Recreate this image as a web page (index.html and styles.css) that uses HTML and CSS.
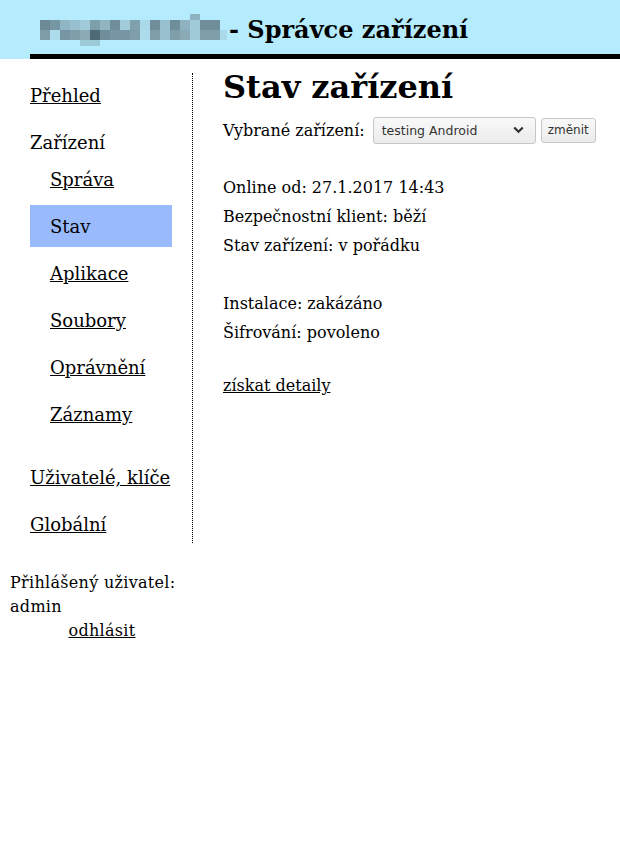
FILE: index.html
```html
<!DOCTYPE html>
<html lang="cs">
<head>
<meta charset="utf-8">
<title>Správce zařízení</title>
<link rel="stylesheet" href="styles.css">
</head>
<body>
<header class="header">
  <div class="header-bar">
    <svg class="logo" width="192" height="32" viewBox="0 0 192 32" aria-hidden="true">
      <rect x="150" y="0" width="10" height="6" fill="#8fb2c0"/>
      <rect x="0" y="6" width="10" height="10" fill="#6b8a96"/>
      <rect x="10" y="6" width="10" height="10" fill="#7596a2"/>
      <rect x="20" y="6" width="10" height="10" fill="#90b6c4"/>
      <rect x="30" y="6" width="10" height="10" fill="#98c0cf"/>
      <rect x="40" y="6" width="10" height="10" fill="#a0cad8"/>
      <rect x="50" y="6" width="10" height="10" fill="#7e9eaa"/>
      <rect x="60" y="6" width="10" height="10" fill="#90b4c2"/>
      <rect x="70" y="6" width="10" height="10" fill="#6f8e9a"/>
      <rect x="80" y="6" width="10" height="10" fill="#a2ccda"/>
      <rect x="90" y="6" width="10" height="10" fill="#7fa0ac"/>
      <rect x="100" y="6" width="10" height="10" fill="#aad9e9"/>
      <rect x="110" y="6" width="10" height="10" fill="#6f8e9a"/>
      <rect x="120" y="6" width="10" height="10" fill="#98c0cf"/>
      <rect x="130" y="6" width="10" height="10" fill="#6f8e9a"/>
      <rect x="140" y="6" width="10" height="10" fill="#8fb2c0"/>
      <rect x="150" y="6" width="10" height="10" fill="#a0cad8"/>
      <rect x="160" y="6" width="10" height="10" fill="#6f8e9a"/>
      <rect x="170" y="6" width="10" height="10" fill="#6f8e9a"/>
      <rect x="0" y="16" width="10" height="10" fill="#7c9ca8"/>
      <rect x="10" y="16" width="10" height="10" fill="#acdcec"/>
      <rect x="20" y="16" width="10" height="10" fill="#7596a2"/>
      <rect x="30" y="16" width="10" height="10" fill="#7e9eaa"/>
      <rect x="40" y="16" width="10" height="10" fill="#8aaab6"/>
      <rect x="50" y="16" width="10" height="10" fill="#4e6a74"/>
      <rect x="60" y="16" width="10" height="10" fill="#6f8e9a"/>
      <rect x="70" y="16" width="10" height="10" fill="#7596a2"/>
      <rect x="80" y="16" width="10" height="10" fill="#7596a2"/>
      <rect x="90" y="16" width="10" height="10" fill="#7e9eaa"/>
      <rect x="100" y="16" width="10" height="10" fill="#acdcec"/>
      <rect x="110" y="16" width="10" height="10" fill="#7e9eaa"/>
      <rect x="120" y="16" width="10" height="10" fill="#98c0cf"/>
      <rect x="130" y="16" width="10" height="10" fill="#7e9eaa"/>
      <rect x="140" y="16" width="10" height="10" fill="#8aaab6"/>
      <rect x="150" y="16" width="10" height="10" fill="#a0cad8"/>
      <rect x="160" y="16" width="10" height="10" fill="#7e9eaa"/>
      <rect x="170" y="16" width="10" height="10" fill="#7e9eaa"/>
      <rect x="180" y="16" width="7" height="10" fill="#aad9e9"/>
      <rect x="40" y="26" width="20" height="6" fill="#9ccad8"/>
    </svg>
    <h1 class="site-title">- Správce zařízení</h1>
  </div>
</header>
<div class="layout">
  <aside class="side">
    <nav class="nav">
      <a class="nav-item top" href="#">Přehled</a>
      <div class="nav-label">Zařízení</div>
      <a class="nav-item sub" href="#">Správa</a>
      <span class="nav-item sub active">Stav</span>
      <a class="nav-item sub" href="#">Aplikace</a>
      <a class="nav-item sub" href="#">Soubory</a>
      <a class="nav-item sub" href="#">Oprávnění</a>
      <a class="nav-item sub" href="#">Záznamy</a>
      <a class="nav-item top group" href="#">Uživatelé, klíče</a>
      <a class="nav-item top last" href="#">Globální</a>
    </nav>
    <div class="login">
      Přihlášený uživatel:<br>admin
      <div class="logout"><a href="#">odhlásit</a></div>
    </div>
  </aside>
  <main class="main">
    <h2 class="page-title">Stav zařízení</h2>
    <form class="device-form">
      <label class="device-label">Vybrané zařízení:</label>
      <span class="select-wrap">
        <select class="device-select">
          <option>testing Android</option>
        </select>
        <svg class="chevron" width="11" height="8" viewBox="0 0 11 8" aria-hidden="true"><path d="M1.2 1.5 L5.5 5.8 L9.8 1.5" fill="none" stroke="#333" stroke-width="2.2"/></svg>
      </span>
      <button type="button" class="device-btn">změnit</button>
    </form>
    <p class="info first">Online od: 27.1.2017 14:43<br>Bezpečnostní klient: běží<br>Stav zařízení: v pořádku</p>
    <p class="info">Instalace: zakázáno<br>Šifrování: povoleno</p>
    <p class="info link-p"><a href="#">získat detaily</a></p>
  </main>
</div>
</body>
</html>
```
FILE: styles.css
```css
html, body {
  margin: 0;
  padding: 0;
  background: #fff;
}
body {
  font-family: "DejaVu Serif", serif;
  color: #000;
}
a {
  color: #000;
}
.header {
  background: #b4ecfe;
  padding: 13px 0 0 30px;
}
.header-bar {
  display: flex;
  align-items: flex-start;
  height: 41px;
  border-bottom: 5px solid #000;
  padding-left: 10px;
}
.logo {
  display: block;
  flex: none;
  margin-top: 1px;
}
.site-title {
  margin: 0 0 0 -3px;
  font-size: 24px;
  font-weight: bold;
  line-height: 34px;
}
.layout {
  display: flex;
  align-items: flex-start;
}
.side {
  flex: none;
  width: 193px;
}
.nav {
  margin-top: 14px;
  width: 192px;
  border-right: 1px dotted #000;
  padding: 1px 0 0;
  display: flex;
  flex-direction: column;
  font-size: 18px;
}
.nav-item, .nav-label {
  display: block;
  height: 42px;
  line-height: 43px;
}
.nav-item + .nav-item, .nav-item + .nav-label {
  margin-top: 5px;
}
.nav-label {
  margin-top: 5px !important;
  padding-left: 30px;
}
.nav-label + .nav-item {
  margin-top: -5px;
}
.top {
  padding-left: 30px;
}
.sub {
  margin-left: 30px;
  width: 122px;
  padding-left: 20px;
}
.active {
  background: #99bbfd;
}
.group {
  margin-top: 21px !important;
}
.last {
  height: 40px;
}
.login {
  margin: 28px 0 0 10px;
  width: 184px;
  font-size: 16px;
  line-height: 24px;
  letter-spacing: 0.3px;
}
.logout {
  text-align: center;
}
.main {
  padding-left: 30px;
  font-size: 16px;
}
.page-title {
  margin: 10px 0 0;
  font-size: 32px;
  font-weight: bold;
  line-height: 37px;
}
.device-form {
  display: flex;
  align-items: center;
  margin-top: 9px;
  height: 30px;
}
.device-label {
  margin-right: 8px;
}
.select-wrap {
  position: relative;
  display: block;
  margin-right: 5px;
}
.device-select {
  display: block;
  appearance: none;
  -webkit-appearance: none;
  width: 163px;
  height: 27px;
  margin: 0;
  padding: 0 24px 0 8px;
  border: 1px solid #c6c6c6;
  border-radius: 3px;
  background: linear-gradient(#f9f9f9, #ebebeb);
  color: #333;
  font-family: "DejaVu Sans", sans-serif;
  font-size: 12.5px;
}
.chevron {
  position: absolute;
  right: 12px;
  top: 9px;
  pointer-events: none;
}
.device-btn {
  height: 25px;
  padding: 0 6px;
  border: 1px solid #c6c6c6;
  border-radius: 3px;
  background: linear-gradient(#f9f9f9, #ebebeb);
  color: #333;
  font-family: "DejaVu Sans", sans-serif;
  font-size: 12px;
  margin: 0;
}
.info {
  margin: 29px 0 0;
  line-height: 29px;
}
.info.first {
  margin-top: 28px;
}
.link-p {
  margin-top: 24px;
}
```
